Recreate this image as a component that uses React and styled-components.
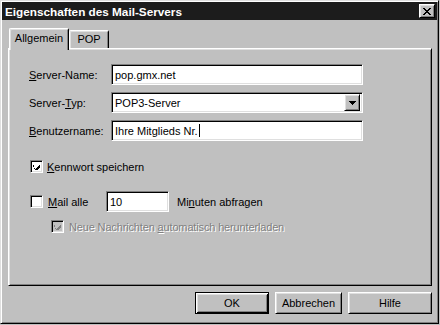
import styled, { createGlobalStyle } from "styled-components"

const GlobalStyle = createGlobalStyle`
    html, body {
        margin: 0;
        padding: 0;
        background: #c0c0c0;
    }
    body {
        font-family: "Liberation Sans", Arial, sans-serif;
        font-size: 11px;
        color: #000;
    }
`

const raised = `
    border: 1px solid;
    border-color: #fff #000 #000 #fff;
    box-shadow: inset 1px 1px #dfdfdf, inset -1px -1px #808080;
`

const sunken = `
    border: 1px solid;
    border-color: #808080 #fff #fff #808080;
    box-shadow: inset 1px 1px #000, inset -1px -1px #dfdfdf;
`

const Window = styled.div`
    box-sizing: border-box;
    width: 439px;
    height: 324px;
    padding: 1px;
    background: #c0c0c0;
    border: 1px solid;
    border-color: #dfdfdf #000 #000 #dfdfdf;
    box-shadow: inset 1px 1px #fff, inset -1px -1px #808080;
    display: flex;
    flex-direction: column;
`

const TitleBar = styled.div`
    height: 18px;
    background: #1c1c1c;
    display: flex;
    align-items: center;
    justify-content: space-between;
    padding: 0 2px 0 3px;
`

const Title = styled.span`
    color: #fff;
    font-weight: bold;
    font-size: 11.75px;
`

const CloseButton = styled.div`
    box-sizing: border-box;
    width: 16px;
    height: 14px;
    background: #c0c0c0;
    ${raised}
    display: flex;
    align-items: center;
    justify-content: center;
`

const Body = styled.div`
    padding: 8px 5px 0 6px;
    display: flex;
    flex-direction: column;
`

const TabStrip = styled.div`
    display: flex;
    align-items: flex-end;
    height: 20px;
    padding-left: 1px;
    position: relative;
    z-index: 1;
`

const Tab = styled.div`
    box-sizing: border-box;
    width: ${p => p.$width}px;
    height: ${p => (p.$active ? 22 : 18)}px;
    margin-bottom: ${p => (p.$active ? -2 : 0)}px;
    padding-top: ${p => (p.$active ? 3 : 2)}px;
    background: #c0c0c0;
    border: 1px solid;
    border-color: #fff #000 transparent #fff;
    border-bottom: none;
    border-radius: 2px 2px 0 0;
    box-shadow: inset 1px 1px #dfdfdf, inset -1px 0 #808080;
    text-align: center;
    line-height: 13px;
`

const Panel = styled.div`
    box-sizing: border-box;
    width: 424px;
    height: 238px;
    ${raised}
    padding: 15px 0 0 20px;
    display: flex;
    flex-direction: column;
`

const FormGrid = styled.div`
    display: grid;
    grid-template-columns: 82px 252px;
    grid-auto-rows: 21px;
    row-gap: 7px;
    align-items: center;
`

const Key = styled.span`
    text-decoration: underline;
`

const Field = styled.div`
    box-sizing: border-box;
    height: 21px;
    width: ${p => (p.$width ? `${p.$width}px` : "100%")};
    background: #fff;
    ${sunken}
    padding: 0 3px;
    display: flex;
    align-items: center;
    justify-content: space-between;
    white-space: nowrap;
`

const Caret = styled.span`
    display: inline-block;
    width: 1px;
    height: 13px;
    background: #000;
    margin-left: 1px;
    vertical-align: -2px;
`

const DropButton = styled.div`
    box-sizing: border-box;
    width: 16px;
    height: 17px;
    margin-right: -1px;
    background: #c0c0c0;
    ${raised}
    display: flex;
    align-items: center;
    justify-content: center;
`

const CheckRow = styled.div`
    display: flex;
    align-items: center;
    height: ${p => p.$height || 13}px;
    margin-top: ${p => p.$top}px;
    margin-left: ${p => p.$indent}px;
`

const Box = styled.div`
    box-sizing: border-box;
    width: 13px;
    height: 13px;
    flex: none;
    background: ${p => (p.$disabled ? "#c0c0c0" : "#fff")};
    ${sunken}
    display: flex;
    align-items: center;
    justify-content: center;
`

const CheckText = styled.span`
    margin-left: ${p => p.$gap || 4}px;
    width: ${p => (p.$width ? `${p.$width}px` : "auto")};
    color: ${p => (p.$disabled ? "#808080" : "#000")};
    text-shadow: ${p => (p.$disabled ? "1px 1px #fff" : "none")};
    letter-spacing: ${p => (p.$disabled ? "-0.15px" : "0")};
    white-space: nowrap;
`

const Plain = styled.span`
    margin-left: 8px;
    white-space: nowrap;
`

const ButtonRow = styled.div`
    display: flex;
    justify-content: flex-end;
    gap: 6px;
    margin-top: 6px;
`

const Button = styled.div`
    box-sizing: border-box;
    width: ${p => p.$width}px;
    height: 22px;
    background: #c0c0c0;
    display: flex;
    align-items: center;
    justify-content: center;
    ${p =>
        p.$default
            ? `
        border: 1px solid #000;
        box-shadow: inset 1px 1px #fff, inset -1px -1px #000, inset 2px 2px #dfdfdf, inset -2px -2px #808080;
    `
            : raised}
`

function Check({ disabled }) {
    return (
        <svg width="7" height="7" viewBox="0 0 7 7" shapeRendering="crispEdges">
            <path
                d="M0 2h1v3h1v1h1v-1h1v-1h1v-1h1v-1h1v3h-1v1h-1v1h-1v1h-1v-1h-1v-1h-1z"
                fill={disabled ? "#808080" : "#000"}
            />
        </svg>
    )
}

export default function App() {
    return (
        <>
            <GlobalStyle />
            <Window>
                <TitleBar>
                    <Title>Eigenschaften des Mail-Servers</Title>
                    <CloseButton>
                        <svg width="8" height="7" viewBox="0 0 8 7" shapeRendering="crispEdges">
                            <path
                                d="M0 0h2v1h1v1h2v-1h1v-1h2v1h-1v1h-1v1h-1v1h1v1h1v1h1v1h-2v-1h-1v-1h-2v1h-1v1h-2v-1h1v-1h1v-1h1v-1h-1v-1h-1v-1h-1z"
                                fill="#000"
                            />
                        </svg>
                    </CloseButton>
                </TitleBar>
                <Body>
                    <TabStrip>
                        <Tab $active $width={60}>Allgemein</Tab>
                        <Tab $width={40}>POP</Tab>
                    </TabStrip>
                    <Panel>
                        <FormGrid>
                            <span><Key>S</Key>erver-Name:</span>
                            <Field>pop.gmx.net</Field>
                            <span>Server-<Key>T</Key>yp:</span>
                            <Field>
                                <span>POP3-Server</span>
                                <DropButton>
                                    <svg width="7" height="4" viewBox="0 0 7 4" shapeRendering="crispEdges">
                                        <path d="M0 0h7v1h-1v1h-1v1h-1v1h-1v-1h-1v-1h-1v-1h-1z" fill="#000" />
                                    </svg>
                                </DropButton>
                            </Field>
                            <span><Key>B</Key>enutzername:</span>
                            <Field>
                                <span>Ihre Mitglieds Nr.<Caret /></span>
                            </Field>
                        </FormGrid>

                        <CheckRow $top={19} $indent={1}>
                            <Box><Check /></Box>
                            <CheckText $gap={4}><Key>K</Key>ennwort speichern</CheckText>
                        </CheckRow>

                        <CheckRow $top={18} $indent={1} $height={21}>
                            <Box />
                            <CheckText $gap={5} $width={58}><Key>M</Key>ail alle</CheckText>
                            <Field $width={63}>10</Field>
                            <Plain>Mi<Key>n</Key>uten abfragen</Plain>
                        </CheckRow>

                        <CheckRow $top={8} $indent={22}>
                            <Box $disabled><Check disabled /></Box>
                            <CheckText $gap={5} $disabled>
                                Neue Nachrichten <Key>a</Key>utomatisch herunterladen
                            </CheckText>
                        </CheckRow>
                    </Panel>
                    <ButtonRow>
                        <Button $default $width={74}>OK</Button>
                        <Button $width={67}>Abbrechen</Button>
                        <Button $width={84}>Hilfe</Button>
                    </ButtonRow>
                </Body>
            </Window>
        </>
    )
}
